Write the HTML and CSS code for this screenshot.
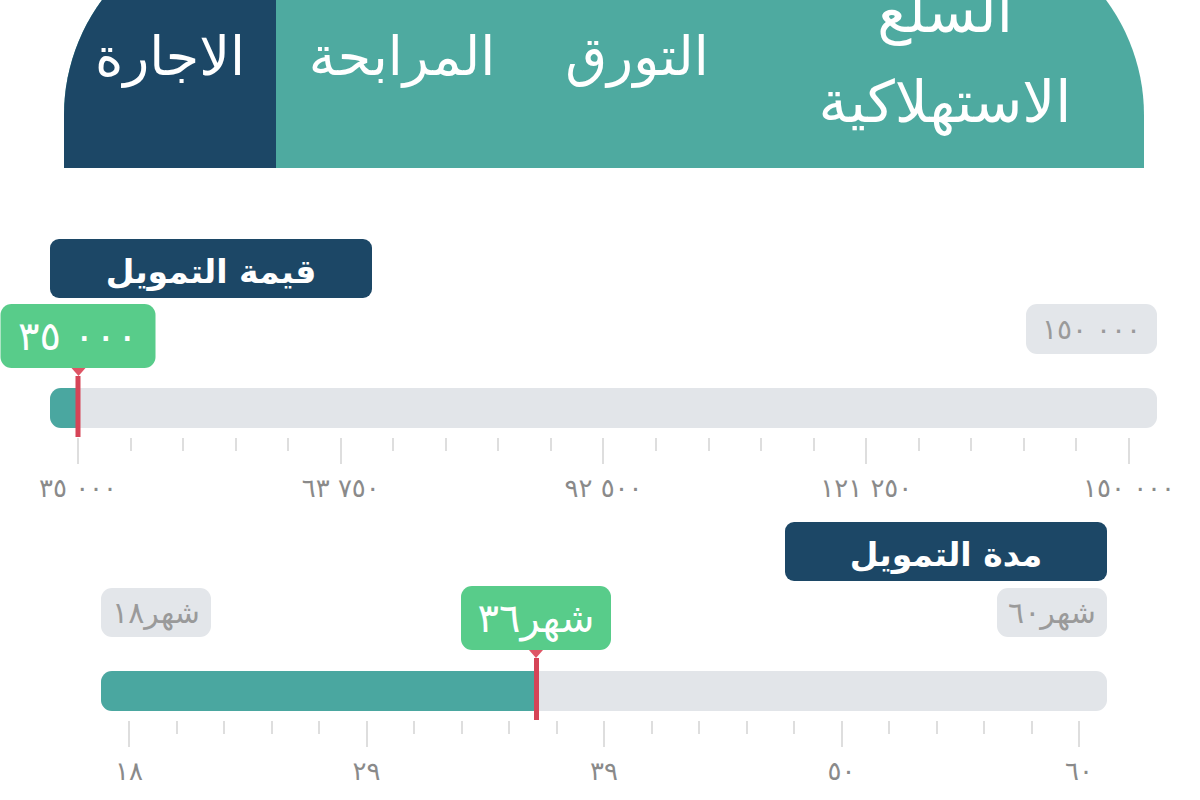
FILE: index.html
```html
<!DOCTYPE html>
<html lang="ar">
<head>
<meta charset="utf-8">
<title>التمويل</title>
<link rel="stylesheet" href="styles.css">
</head>
<body>
<nav class="tabs">
  <div class="tab tab-ijara active">الاجارة</div>
  <div class="tab tab-murabaha">المرابحة</div>
  <div class="tab tab-tawarruq">التورق</div>
  <div class="tab tab-goods">السلع<br>الاستهلاكية</div>
</nav>

<section class="slider slider-amount">
  <div class="head"><div class="title">قيمة التمويل</div></div>
  <div class="rail">
    <div class="values"><span class="pill num">١٥٠ ٠٠٠</span></div>
    <div class="track"><div class="fill" style="width:28px"></div></div>
    <div class="ticks">
      <i class="major"></i><i></i><i></i><i></i><i></i>
      <i class="major"></i><i></i><i></i><i></i><i></i>
      <i class="major"></i><i></i><i></i><i></i><i></i>
      <i class="major"></i><i></i><i></i><i></i><i></i>
      <i class="major"></i>
    </div>
    <div class="tick-labels">
      <span><b class="num">٣٥ ٠٠٠</b></span>
      <span><b class="num">٦٣ ٧٥٠</b></span>
      <span><b class="num">٩٢ ٥٠٠</b></span>
      <span><b class="num">١٢١ ٢٥٠</b></span>
      <span><b class="num">١٥٠ ٠٠٠</b></span>
    </div>
    <div class="thumb" style="left:28px">
      <div class="bubble bubble-amount num">٣٥ ٠٠٠</div>
      <div class="pointer"></div>
      <div class="needle"></div>
    </div>
  </div>
</section>

<section class="slider slider-period">
  <div class="head head-end"><div class="title">مدة التمويل</div></div>
  <div class="rail">
    <div class="values values-both"><span class="pill">شهر١٨</span><span class="pill">شهر٦٠</span></div>
    <div class="track"><div class="fill" style="width:435px"></div></div>
    <div class="ticks">
      <i class="major"></i><i></i><i></i><i></i><i></i>
      <i class="major"></i><i></i><i></i><i></i><i></i>
      <i class="major"></i><i></i><i></i><i></i><i></i>
      <i class="major"></i><i></i><i></i><i></i><i></i>
      <i class="major"></i>
    </div>
    <div class="tick-labels">
      <span><b class="num">١٨</b></span>
      <span><b class="num">٢٩</b></span>
      <span><b class="num">٣٩</b></span>
      <span><b class="num">٥٠</b></span>
      <span><b class="num">٦٠</b></span>
    </div>
    <div class="thumb" style="left:435px">
      <div class="bubble bubble-period">شهر٣٦</div>
      <div class="pointer"></div>
      <div class="needle needle-long"></div>
    </div>
  </div>
</section>
</body>
</html>
```
FILE: styles.css
```css
* { box-sizing: border-box; }
html, body { margin: 0; padding: 0; }
body {
  width: 1200px;
  height: 800px;
  overflow: hidden;
  background: #ffffff;
  font-family: "DejaVu Sans", sans-serif;
}

.tabs {
  display: flex;
  width: 1080px;
  height: 246px;
  margin: -78px 0 0 64px;
  padding-top: 24px;
  border-radius: 193px 193px 0 0;
  overflow: hidden;
  background: #4eaaa0;
}
.tab {
  display: flex;
  align-items: center;
  justify-content: center;
  text-align: center;
  color: #ffffff;
  font-size: 54px;
  line-height: 90px;
}
.tab-ijara { width: 212px; }
.tab-murabaha { width: 252px; }
.tab-tawarruq { width: 218px; }
.tab-goods { width: 398px; font-size: 58px; }
.tab.active { background: #1c4766; }

.slider { position: relative; }
.slider-amount { width: 1107px; margin: 71px 0 0 50px; }
.slider-period { width: 1006px; margin: 19px 0 0 101px; }

.head { display: flex; }
.head-end { justify-content: flex-end; }
.title {
  width: 322px;
  height: 59px;
  border-radius: 9px;
  background: #1c4766;
  color: #ffffff;
  font-weight: bold;
  font-size: 33px;
  line-height: 66px;
  text-align: center;
}

.rail { position: relative; margin-top: 6px; }
.values {
  display: flex;
  justify-content: flex-end;
  height: 64px;
}
.values-both { justify-content: space-between; }
.pill {
  display: flex;
  align-items: center;
  justify-content: center;
  height: 50px;
  border-radius: 11px;
  background: #e3e6ea;
  color: #9a9a9a;
  font-size: 30px;
  white-space: nowrap;
}
.slider-amount .pill { width: 131px; font-size: 28px; letter-spacing: 1px; }
.slider-period .pill { width: 110px; height: 49px; margin-top: 1px; }

.num { direction: ltr; unicode-bidi: bidi-override; }

.track {
  position: relative;
  height: 40px;
  margin-top: 20px;
  border-radius: 11px;
  background: #e2e5e9;
  overflow: hidden;
}
.fill {
  height: 100%;
  background: #4aa7a0;
}

.ticks {
  display: flex;
  justify-content: space-between;
  align-items: flex-start;
  height: 26px;
  margin: 10px 27px 0 27px;
}
.ticks i {
  display: block;
  width: 2px;
  height: 13px;
  background: #dedede;
}
.ticks i.major { height: 26px; }

.tick-labels {
  display: flex;
  justify-content: space-between;
  height: 30px;
  margin: 9px 28px 0 28px;
}
.tick-labels span {
  display: flex;
  justify-content: center;
  width: 0;
  white-space: nowrap;
}
.tick-labels b {
  font-weight: normal;
  font-size: 26px;
  letter-spacing: 1px;
  line-height: 30px;
  color: #8a8a8a;
}

.thumb {
  position: absolute;
  top: 0;
  display: flex;
  flex-direction: column;
  align-items: center;
  transform: translateX(-50%);
}
.bubble {
  display: flex;
  align-items: center;
  justify-content: center;
  height: 64px;
  border-radius: 11px;
  background: #58cc8a;
  color: #ffffff;
  font-size: 40px;
  white-space: nowrap;
}
.bubble-amount { width: 155px; }
.bubble-period { width: 150px; margin-top: -1px; }
.pointer {
  width: 0;
  height: 0;
  border-left: 7px solid transparent;
  border-right: 7px solid transparent;
  border-top: 8px solid #de5565;
}
.needle {
  width: 5px;
  height: 61px;
  background: #d64457;
}
.needle-long { height: 62px; }
```
